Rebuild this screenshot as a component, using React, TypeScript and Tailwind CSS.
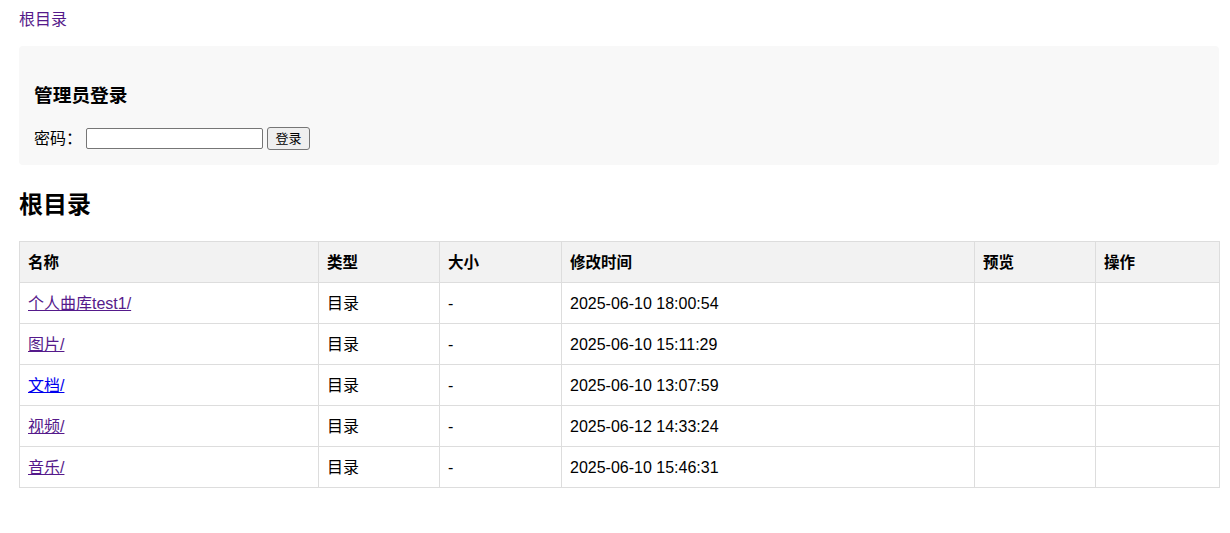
import React from "react";

const rows = [
  { name: "个人曲库test1/", time: "2025-06-10 18:00:54", visited: true },
  { name: "图片/", time: "2025-06-10 15:11:29", visited: true },
  { name: "文档/", time: "2025-06-10 13:07:59", visited: false },
  { name: "视频/", time: "2025-06-12 14:33:24", visited: true },
  { name: "音乐/", time: "2025-06-10 15:46:31", visited: true },
];

const font = { fontFamily: '"Liberation Sans", "Noto Sans CJK SC", sans-serif' };

const cell = "border border-[#dddddd] px-2 pt-[11px] pb-[9px] leading-[20px]";

export default function App() {
  return (
    <div className="min-h-screen bg-white text-black text-[16px]" style={font}>
      <div className="ml-[19px] w-[1200px] pt-[10px]">
        <a href="#" className="block leading-[20px] text-[#551a8b] no-underline">
          根目录
        </a>

        <div className="mt-[16px] rounded bg-[#f8f8f8] px-[15px] pt-[15px] pb-[15px]">
          <h3 className="mt-[24px] text-[18.72px] font-bold leading-[22px]">管理员登录</h3>
          <div className="mt-[20px] flex h-[23px] items-center">
            <span className="leading-[20px]">密码：</span>
            <input
              type="password"
              className="ml-[4px] h-[21px] w-[177px] rounded-[2px] border border-[#767676] bg-white px-1 text-[13px] outline-none"
            />
            <button className="ml-[4px] h-[23px] w-[43px] rounded-[3px] border border-[#767676] bg-[#efefef] text-[13px] leading-none text-black">
              登录
            </button>
          </div>
        </div>

        <h2 className="mt-[25px] text-[24px] font-bold leading-[30px]">根目录</h2>

        <table className="mt-[21px] w-[1200px] table-fixed border-collapse">
          <colgroup>
            <col className="w-[299px]" />
            <col className="w-[121px]" />
            <col className="w-[122px]" />
            <col className="w-[413px]" />
            <col className="w-[121px]" />
            <col className="w-[124px]" />
          </colgroup>
          <thead>
            <tr className="bg-[#f2f2f2]">
              {["名称", "类型", "大小", "修改时间", "预览", "操作"].map((h) => (
                <th key={h} className={cell + " text-left text-[15.5px] font-bold"}>
                  {h}
                </th>
              ))}
            </tr>
          </thead>
          <tbody>
            {rows.map((r) => (
              <tr key={r.name}>
                <td className={cell}>
                  <a
                    href="#"
                    className={r.visited ? "text-[#551a8b] underline" : "text-[#0000ee] underline"}
                  >
                    {r.name}
                  </a>
                </td>
                <td className={cell}>目录</td>
                <td className={cell}>-</td>
                <td className={cell}>{r.time}</td>
                <td className={cell}></td>
                <td className={cell}></td>
              </tr>
            ))}
          </tbody>
        </table>
      </div>
    </div>
  );
}
